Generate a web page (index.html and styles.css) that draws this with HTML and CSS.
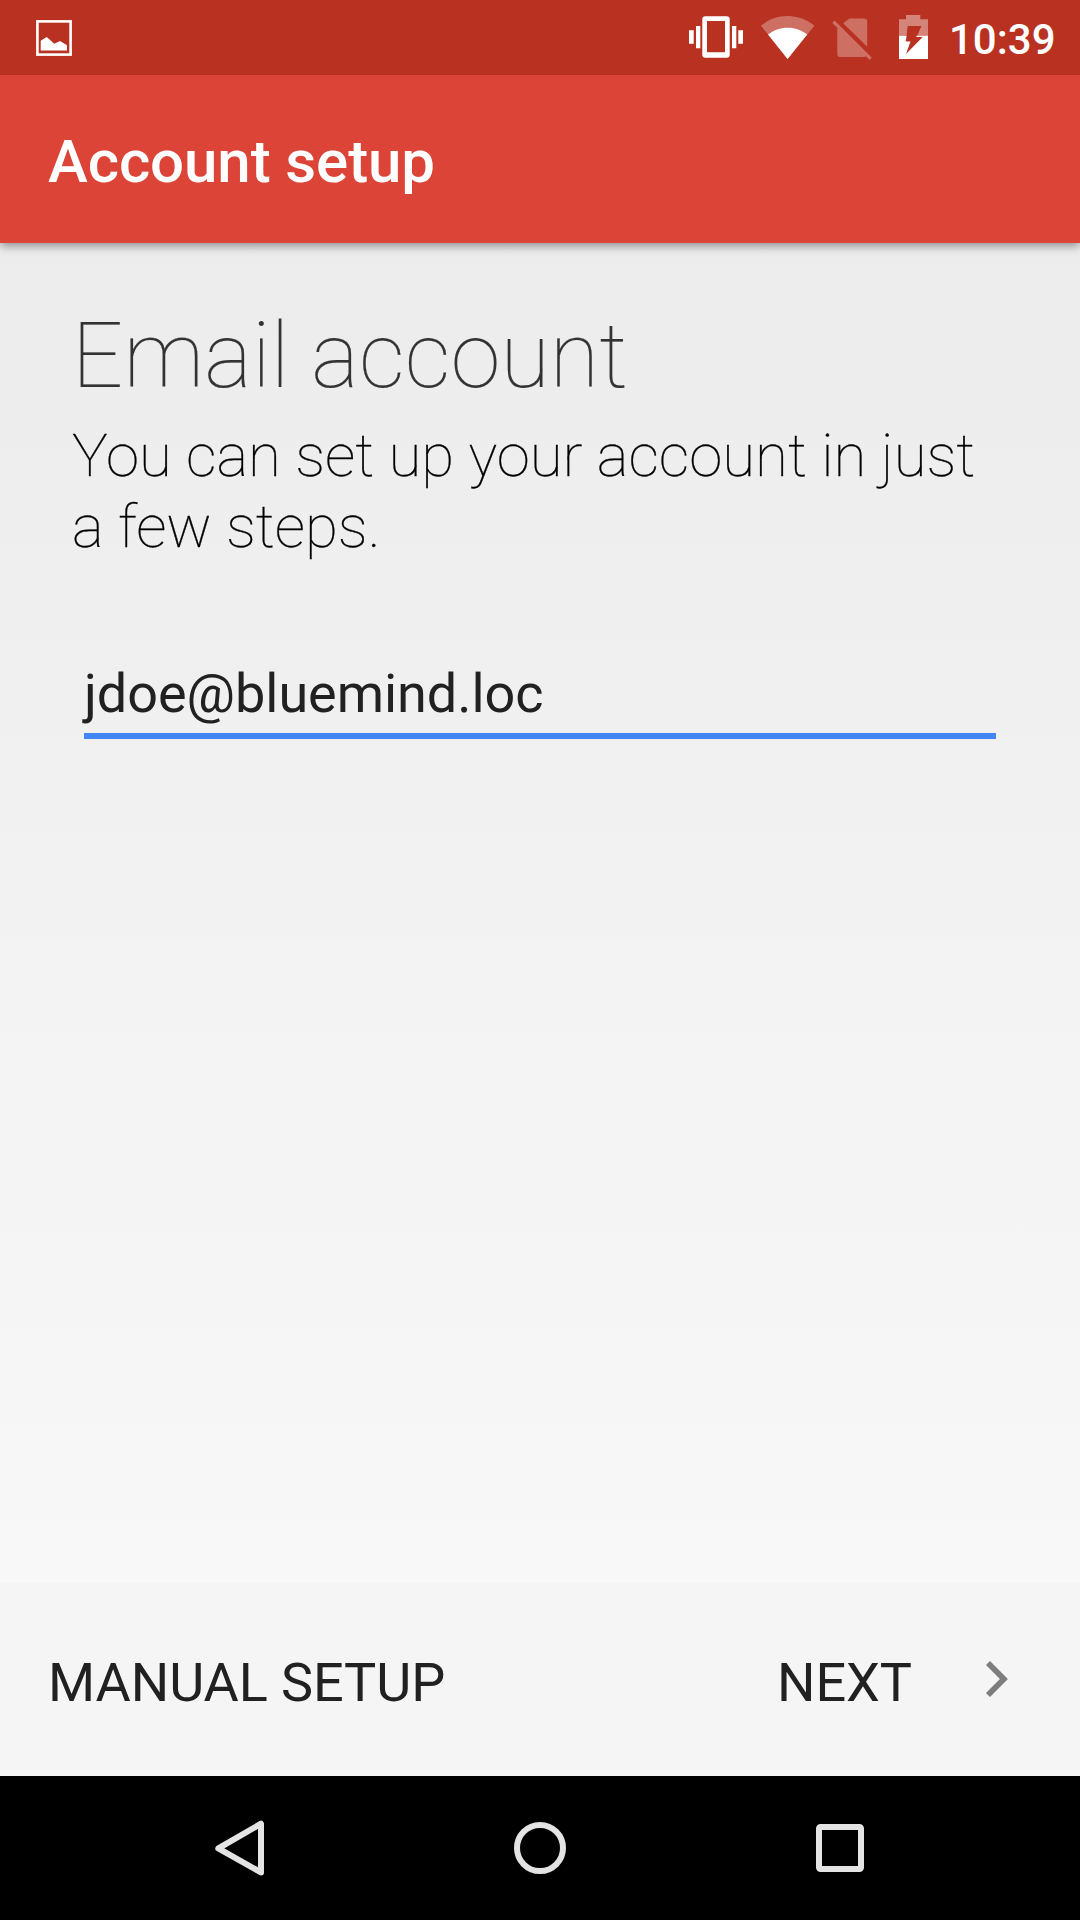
FILE: index.html
```html
<!DOCTYPE html>
<html lang="en">
<head>
<meta charset="utf-8">
<title>Account setup</title>
<link rel="stylesheet" href="styles.css">
</head>
<body>
<div class="screen">
  <div class="status-bar">
    <svg class="icon-picture" width="36" height="36" viewBox="0 0 36 36"><rect x="1.4" y="1.4" width="33.2" height="33.2" fill="none" stroke="#fff" stroke-width="2.6"/><path d="M4.7 20.7 10.7 17l7.6 6.7L24 21l7 4.3v5.2H4.7z" fill="#fff"/></svg>
    <div class="status-icons">
      <svg class="icon-vibrate" width="54" height="42" viewBox="0 0 54 42" fill="#fff"><path d="M0 14.2h4.7v13.6H0zM7 10h4.3v22.3H7zM43 10h4.3v22.3H43zM49.3 14.2H54v13.6h-4.7z"/><path fill-rule="evenodd" d="M16.3.3h21.4a3 3 0 0 1 3 3v35.4a3 3 0 0 1-3 3H16.3a3 3 0 0 1-3-3V3.3a3 3 0 0 1 3-3zM18 5v31.3h18V5z"/></svg>
      <svg class="icon-wifi" width="54" height="43" viewBox="0 0 54 43"><path d="M0 9.7C7.5 3.5 16.500 0 26.600 0S46 3.500 53.300 9.700L26.600 43z" fill="#fff" fill-opacity=".3"/><path d="M7 18.600C12.500 14 19 11.700 26.600 11.700S40.700 14 46.200 18.600L26.600 43z" fill="#fff"/></svg>
      <svg class="icon-sim" width="40" height="42" viewBox="0 0 40 42" fill="#fff" fill-opacity=".3"><path d="M17.500.5H32.200a3 3 0 0 1 3 3V28.700L11.200 5.200z"/><path d="M2.500 2.500 39.700 39.400 37.700 42 34 38.300q-.8.700-1.800.7H8.300a3 3 0 0 1-3-3V9.800L.3 4.900z"/></svg>
      <svg class="icon-battery" width="29" height="44" viewBox="0 0 29 44" fill="#fff" fill-rule="evenodd"><path fill-opacity=".4" d="M7 0H21.300V4.300H29V20.800H18.300L22.300 11H8.700L7.600 20.800H0V4.300H7z"/><path d="M0 20.800H7.600L6.700 26.500H11.500L7 39 23.700 21.900H17.200L17.700 20.800H29V44H0z"/></svg>
    </div>
    <span class="clock">10:39</span>
  </div>
  <header class="app-bar"><h1 class="app-title">Account setup</h1></header>
  <main class="content">
    <h2 class="heading">Email account</h2>
    <p class="lead">You can set up your account in just a few steps.</p>
    <div class="email-field">jdoe@bluemind.loc</div>
  </main>
  <footer class="actions">
    <span class="action">MANUAL SETUP</span>
    <span class="action next">NEXT
      <svg class="chevron" width="22" height="36" viewBox="0 0 22 36"><path d="M2 2 17.900 18 2 34" fill="none" stroke="#7d7d7d" stroke-width="5.700"/></svg>
    </span>
  </footer>
  <nav class="nav-bar">
    <svg width="60" height="60" viewBox="0 0 60 60"><path d="M51 3.300V52L8.300 28z" transform="translate(0 .4)"/></svg>
    <svg width="60" height="60" viewBox="0 0 60 60"><circle cx="30" cy="28" r="23"/></svg>
    <svg width="60" height="60" viewBox="0 0 60 60"><rect x="9" y="7" width="42" height="42" rx="1.500"/></svg>
  </nav>
</div>
</body>
</html>
```
FILE: styles.css
```css
* { box-sizing: border-box; }

body {
  margin: 0;
  font-family: Roboto, "Liberation Sans", sans-serif;
}

h1, h2, p { margin: 0; }

svg { display: block; flex: none; }

.screen {
  width: 1080px;
  height: 1920px;
  display: flex;
  flex-direction: column;
  overflow: hidden;
}

.status-bar {
  height: 75px;
  flex: none;
  position: relative;
  z-index: 2;
  display: flex;
  align-items: flex-start;
  padding: 0 25px 0 36px;
  background: #b93221;
  color: #fff;
}

.icon-picture { margin-top: 20px; }

.status-icons {
  display: flex;
  margin-left: auto;
}

.icon-vibrate { margin-top: 16px; }
.icon-wifi { margin: 16px 0 0 18px; }
.icon-sim { margin: 18px 0 0 17px; }
.icon-battery { margin: 15px 0 0 27px; }

.clock {
  width: 106px;
  margin: 15px 0 0 21px;
  font-size: 42px;
  line-height: 49px;
  font-weight: 500;
  white-space: nowrap;
}

.app-bar {
  height: 168px;
  flex: none;
  position: relative;
  z-index: 1;
  padding: 51px 48px 0;
  background: #db4437;
  box-shadow: 0 3px 9px rgba(0, 0, 0, .4);
}

.app-title {
  color: #fff;
  font-size: 60px;
  line-height: 72px;
  font-weight: 500;
  letter-spacing: -.1px;
}

.content {
  height: 1340px;
  flex: none;
  padding: 61px 72px 0;
  background: linear-gradient(#ececec, #f8f8f8);
}

.heading {
  color: #333;
  font-size: 90px;
  line-height: 106px;
  font-weight: 100;
  letter-spacing: .2px;
  -webkit-text-stroke: .2px #333;
}

.lead {
  width: 920px;
  margin-top: 10px;
  color: #000;
  font-size: 60px;
  line-height: 71px;
  font-weight: 100;
  letter-spacing: -.03px;
  -webkit-text-stroke: .3px #000;
}

.email-field {
  height: 88px;
  margin: 89px 12px 0;
  padding-top: 11px;
  border-bottom: 6px solid #4285f4;
  color: #212121;
  font-size: 54px;
  line-height: 64px;
  letter-spacing: -.05px;
}

.actions {
  height: 193px;
  flex: none;
  display: flex;
  justify-content: space-between;
  padding: 68px 72px 0 48px;
  background: #f5f5f5;
  color: #212121;
  font-size: 54px;
  line-height: 64px;
  letter-spacing: -.08px;
}

.action { white-space: nowrap; }

.next {
  display: flex;
  gap: 74px;
}

.chevron { margin-top: 10px; }

.nav-bar {
  height: 144px;
  flex: none;
  display: flex;
  justify-content: center;
  gap: 240px;
  padding-top: 44px;
  background: #000;
  fill: none;
  stroke: #e4e4e4;
  stroke-width: 6;
  stroke-linejoin: round;
}
```
